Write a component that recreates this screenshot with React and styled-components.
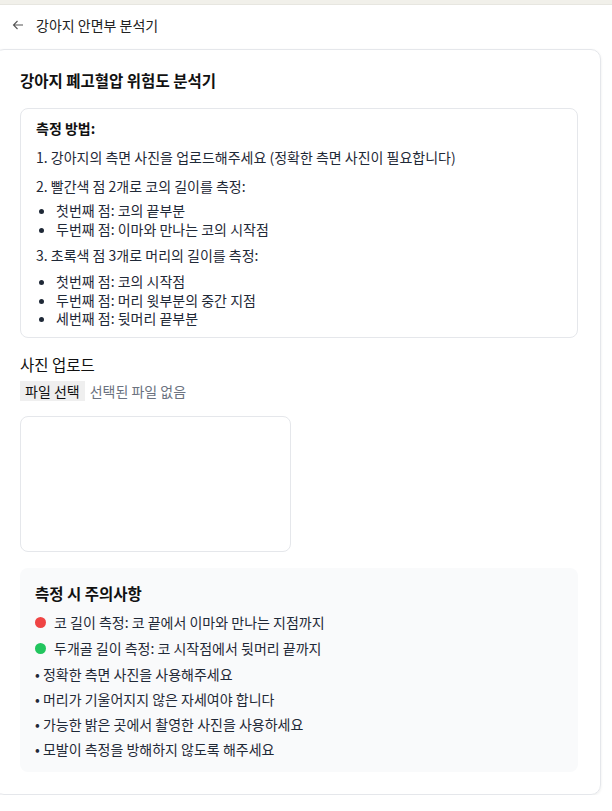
import React from "react";
import styled, { createGlobalStyle } from "styled-components";

const GlobalStyle = createGlobalStyle`
  html, body {
    margin: 0;
    padding: 0;
    background: #ffffff;
  }
  body {
    font-family: "Noto Sans CJK KR", "Noto Sans", sans-serif;
    color: #1f2937;
    overflow: hidden;
  }
`;

const TopStrip = styled.div`
  height: 4px;
  background: #f1f0ea;
`;

const Header = styled.header`
  display: flex;
  align-items: center;
  gap: 12px;
  height: 40px;
  padding-left: 12px;
  background: #fff;
  border-top: 1px solid #e7e6e0;
  font-size: 14px;
  color: #222;
`;

const BackArrow = styled.svg`
  width: 12px;
  height: 12px;
  flex-shrink: 0;
`;

const Card = styled.main`
  margin: 4px 11px 0 -6px;
  border: 1px solid #e5e7eb;
  border-radius: 10px;
  box-shadow: 0 1px 3px rgba(0, 0, 0, 0.08);
  padding: 19px 22px 22px 25px;
  display: flex;
  flex-direction: column;
  font-size: 14px;
`;

const Title = styled.h1`
  margin: 0 0 17px;
  font-size: 15.5px;
  font-weight: 700;
  line-height: 22px;
  color: #111;
`;

const InfoBox = styled.section`
  border: 1px solid #e5e7eb;
  border-radius: 8px;
  padding: 9px 15px 9.5px;
`;

const InfoHeading = styled.h2`
  margin: 0 0 10px;
  font-size: 14px;
  font-weight: 700;
  line-height: 20px;
  color: #111;
`;

const Step = styled.p`
  margin: 0 0 ${(p) => p.$gap}px;
  line-height: 19px;
`;

const Dots = styled.ul`
  margin: 0 0 8px;
  padding-left: 20px;
  line-height: 18.5px;
  &:last-child {
    margin-bottom: 0;
  }
`;

const UploadLabel = styled.label`
  display: block;
  margin: 15px 0 6px;
  font-size: 15.5px;
  line-height: 22px;
  color: #111;
`;

const FileRow = styled.div`
  display: flex;
  align-items: center;
  gap: 5px;
  line-height: 20px;
`;

const FileButton = styled.span`
  background: #efefef;
  padding: 0 5px;
  color: #111;
`;

const FileStatus = styled.span`
  color: #6b7280;
`;

const Preview = styled.div`
  margin-top: 15px;
  width: 271px;
  height: 136px;
  box-sizing: border-box;
  border: 1px solid #e5e7eb;
  border-radius: 8px;
`;

const CautionBox = styled.section`
  margin-top: 16px;
  background: #f9fafb;
  border-radius: 8px;
  padding: 14px 15px 11px;
`;

const CautionTitle = styled.h2`
  margin: 0 0 5px;
  font-size: 15.5px;
  font-weight: 700;
  line-height: 22px;
  color: #111;
`;

const Item = styled.div`
  display: flex;
  align-items: center;
  gap: 8px;
  height: 26px;
`;

const Dot = styled.span`
  width: 11px;
  height: 11px;
  border-radius: 50%;
  background: ${(p) => p.$color};
`;

const Note = styled.div`
  height: 25px;
  display: flex;
  align-items: center;
`;

const notes = [
  "정확한 측면 사진을 사용해주세요",
  "머리가 기울어지지 않은 자세여야 합니다",
  "가능한 밝은 곳에서 촬영한 사진을 사용하세요",
  "모발이 측정을 방해하지 않도록 해주세요",
];

export default function App() {
  return (
    <>
      <GlobalStyle />
      <TopStrip />
      <Header>
        <BackArrow viewBox="0 0 12 12" fill="none" stroke="#555" strokeWidth="1.1">
          <path d="M11 6H1.5M5.5 2L1.5 6l4 4" />
        </BackArrow>
        강아지 안면부 분석기
      </Header>
      <Card>
        <Title>강아지 폐고혈압 위험도 분석기</Title>
        <InfoBox>
          <InfoHeading>측정 방법:</InfoHeading>
          <Step $gap={10}>1. 강아지의 측면 사진을 업로드해주세요 (정확한 측면 사진이 필요합니다)</Step>
          <Step $gap={5}>2. 빨간색 점 2개로 코의 길이를 측정:</Step>
          <Dots>
            <li>첫번째 점: 코의 끝부분</li>
            <li>두번째 점: 이마와 만나는 코의 시작점</li>
          </Dots>
          <Step $gap={7}>3. 초록색 점 3개로 머리의 길이를 측정:</Step>
          <Dots>
            <li>첫번째 점: 코의 시작점</li>
            <li>두번째 점: 머리 윗부분의 중간 지점</li>
            <li>세번째 점: 뒷머리 끝부분</li>
          </Dots>
        </InfoBox>

        <UploadLabel>사진 업로드</UploadLabel>
        <FileRow>
          <FileButton>파일 선택</FileButton>
          <FileStatus>선택된 파일 없음</FileStatus>
        </FileRow>
        <Preview />

        <CautionBox>
          <CautionTitle>측정 시 주의사항</CautionTitle>
          <Item>
            <Dot $color="#ef4444" />
            코 길이 측정: 코 끝에서 이마와 만나는 지점까지
          </Item>
          <Item>
            <Dot $color="#22c55e" />
            두개골 길이 측정: 코 시작점에서 뒷머리 끝까지
          </Item>
          {notes.map((n) => (
            <Note key={n}>• {n}</Note>
          ))}
        </CautionBox>
      </Card>
    </>
  );
}
